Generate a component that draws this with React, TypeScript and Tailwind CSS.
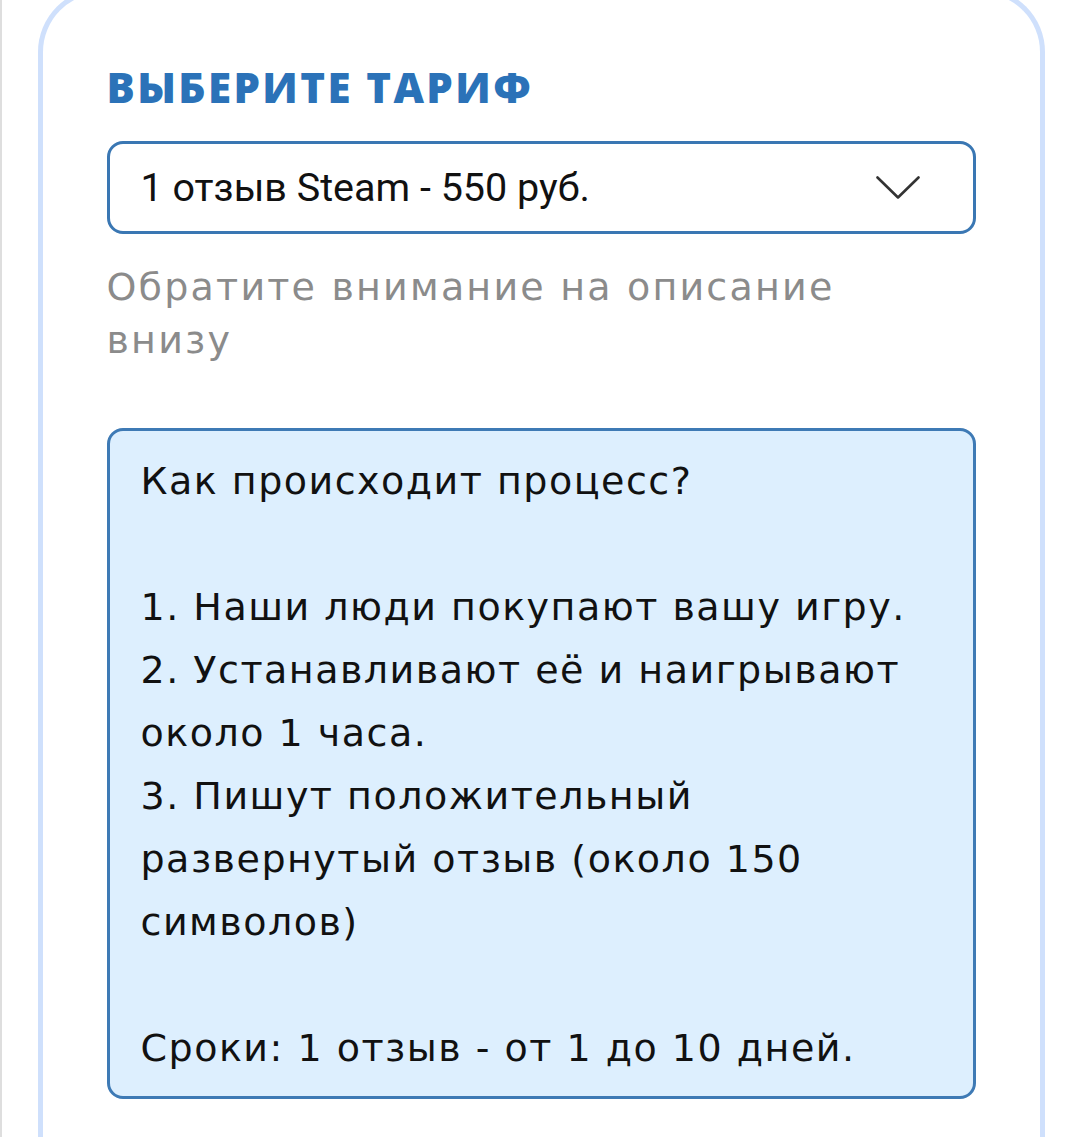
// ─── Content ──────────────────────────────────────────────────────────────────
const STEPS = [
    '1. Наши люди покупают вашу игру.',
    '2. Устанавливают её и наигрывают',
    'около 1 часа.',
    '3. Пишут положительный',
    'развернутый отзыв (около 150',
    'символов)',
];

const body = "font-['DejaVu_Sans',sans-serif]";

function Chevron() {
    return (
        <svg width="44" height="24" viewBox="0 0 44 24" fill="none" className="text-[#333]">
            <polyline points="1.5,1.5 22,21.5 42.5,1.5" stroke="currentColor" strokeWidth="2.6" strokeLinecap="round" strokeLinejoin="round" />
        </svg>
    );
}

export default function App() {
    return (
        <div className="min-h-[1137px] bg-white border-l-2 border-[#dedede] overflow-hidden">
            <div className="mx-auto -mt-[12px] w-[1007px] min-h-[1160px] rounded-t-[64px] border-[5px] border-b-0 border-[#cfe0fc] px-[64px] pt-[73px]">
                <h2 className="font-['Open_Sans',sans-serif] text-[42px] font-extrabold leading-none tracking-[2.4px] text-[#2b72b8]">
                    ВЫБЕРИТЕ ТАРИФ
                </h2>

                <button className="mt-[33px] flex h-[93px] w-full items-center justify-between rounded-[16px] border-[3px] border-[#3a77b3] bg-white pl-[31px] pr-[53px]">
                    <span className="font-['Roboto',sans-serif] text-[39.5px] text-[#111]">1 отзыв Steam - 550 руб.</span>
                    <Chevron />
                </button>

                <p className={`${body} mt-[27px] text-[38px] leading-[53px] tracking-[2.2px] text-[#8b8b8b]`}>
                    Обратите внимание на описание<br />внизу
                </p>

                <div className={`${body} mt-[61px] rounded-[16px] border-[3px] border-[#3e7ab5] bg-[#ddeffe] px-[31px] pt-[19px] pb-[16px] text-[38px] leading-[63px] tracking-[1.5px] text-[#111]`}>
                    <p>Как происходит процесс?</p>
                    <p className="h-[63px]" />
                    {STEPS.map(line => (
                        <p key={line}>{line}</p>
                    ))}
                    <p className="h-[63px]" />
                    <p>Сроки: 1 отзыв - от 1 до 10 дней.</p>
                </div>
            </div>
        </div>
    );
}
